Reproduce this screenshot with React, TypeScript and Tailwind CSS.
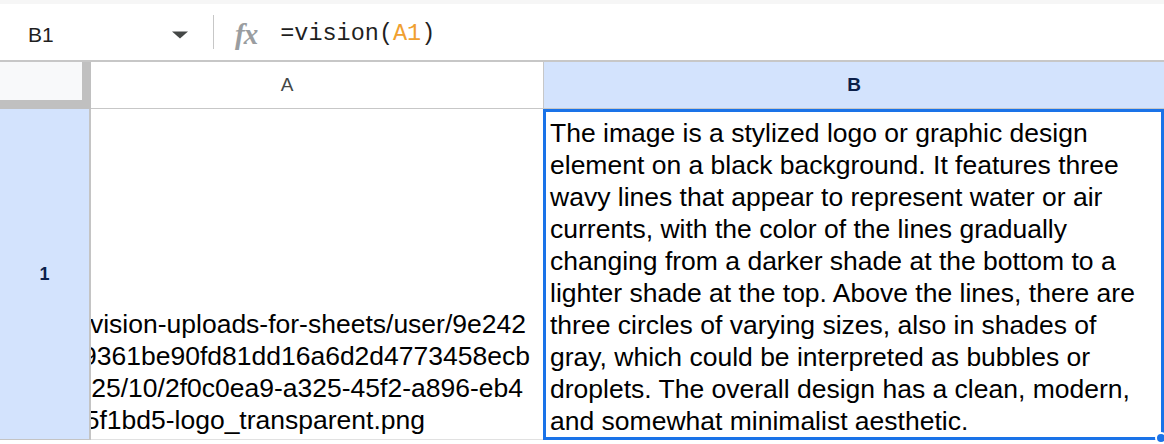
export default function App() {
  const sans = "font-['Liberation_Sans',Arial,sans-serif]";
  return (
    <div className={`w-[1164px] h-[444px] bg-white overflow-hidden text-black ${sans}`}>
      <div className="h-[4px] bg-[#f6f6f6]" />
      {/* formula bar */}
      <div className="h-[58px] flex items-center pt-[4px] border-b-2 border-[#c7c7c7]">
        <div className="w-[213px] flex items-center justify-between pl-[28px] pr-[25px]">
          <span className="text-[21px] text-[#1f1f1f] leading-none">B1</span>
          <svg width="16" height="8" viewBox="0 0 16 8" className="mt-[1px]">
            <path d="M0 0.5 L16 0.5 L8 7.5 Z" fill="#444746" />
          </svg>
        </div>
        <div className="w-px h-[34px] bg-[#c7c7c7] -mt-[4px]" />
        <span className="ml-[21px] font-['Liberation_Serif',serif] italic font-bold text-[29px] leading-none text-[#9a9da0] tracking-[-1px]">
          fx
        </span>
        <span className="ml-[23px] font-['Liberation_Mono',monospace] text-[23.5px] leading-none text-[#1f1f1f]">
          =vision(<span className="text-[#f0a030]">A1</span>)
        </span>
      </div>
      {/* grid */}
      <div className="grid grid-cols-[91px_452px_621px]">
        {/* corner */}
        <div className="h-[47px] bg-[#c0c0c0]">
          <div className="w-[82px] h-[38px] bg-[#f8f9fa]" />
        </div>
        <div className="h-[47px] flex items-center justify-center pr-[60px] border-b border-[#c7c7c7] text-[19px] text-[#444746]">
          A
        </div>
        <div className="h-[47px] flex items-center justify-center bg-[#d3e3fd] border-b border-l border-[#c7c7c7] text-[19px] font-bold text-[#0b1f4a]">
          B
        </div>
        {/* row 1 */}
        <div className="h-[331px] bg-[#d3e3fd] border-r-2 border-b border-[#c4c4c4] flex items-center justify-center text-[18px] font-bold text-[#0b1f4a]">
          1
        </div>
        <div className="h-[331px] border-b border-[#e1e1e1] overflow-hidden flex flex-col items-end justify-end pb-[3px] text-[26.5px] leading-[32px]">
          <div className="whitespace-nowrap mr-[17px]">vision-uploads-for-sheets/user/9e242</div>
          <div className="whitespace-nowrap mr-[13px]">e29361be90fd81dd16a6d2d4773458ecb</div>
          <div className="whitespace-nowrap mr-[20px]">25/10/2f0c0ea9-a325-45f2-a896-eb4</div>
          <div className="whitespace-nowrap mr-[118px]">b45f1bd5-logo_transparent.png</div>
        </div>
        <div className="relative h-[331px] border-[3px] border-[#1a73e8] pl-[4px] pr-[10px] pt-[5px] text-[26.5px] leading-[32px]">
          The image is a stylized logo or graphic design element on a black background. It features three wavy lines
          that appear to represent water or air currents, with the color of the lines gradually changing from a darker
          shade at the bottom to a lighter shade at the top. Above the lines, there are three circles of varying sizes,
          also in shades of gray, which could be interpreted as bubbles or droplets. The overall design has a clean,
          modern, and somewhat minimalist aesthetic.
          <div className="absolute right-[-6px] bottom-[-7px] w-[12px] h-[12px] rounded-full bg-[#1a73e8] border-2 border-white" />
        </div>
      </div>
    </div>
  );
}
